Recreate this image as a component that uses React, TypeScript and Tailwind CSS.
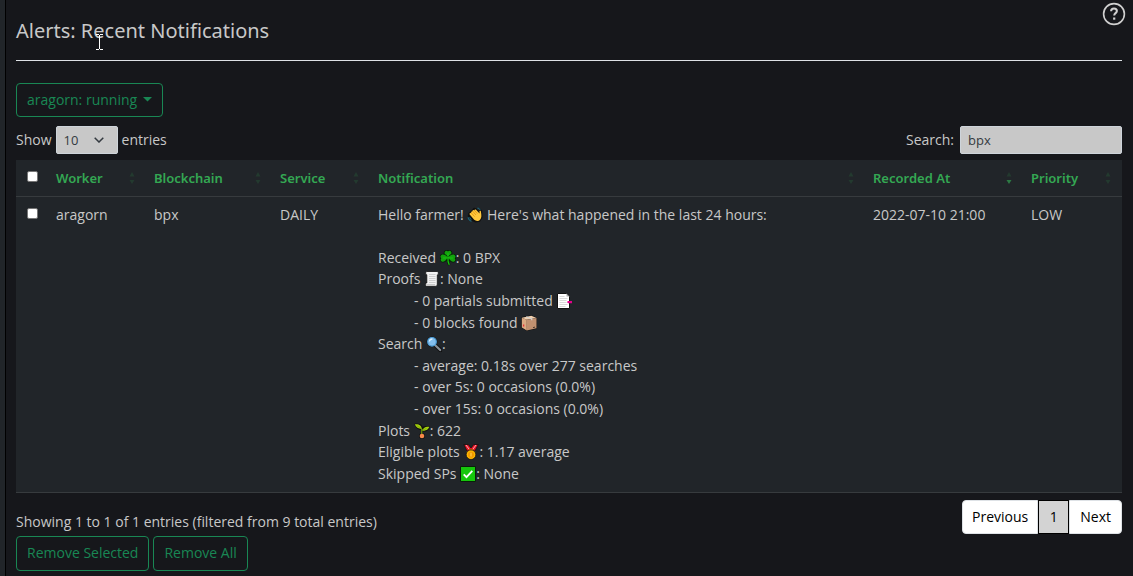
import type { ReactNode } from "react";

function Glyph({ children }: { children: ReactNode }) {
  return (
    <svg viewBox="0 0 16 16" className="inline-block h-4 w-4 align-[-3px]" aria-hidden="true">
      {children}
    </svg>
  );
}

const Wave = () => (
  <Glyph>
    <path d="M2 6.5 5 4l2-2.5L9 2l3 3.5 1-2.5 1.5.7.3 6.8-2.3 3.500-4 .8-3-1.500L1.500 9z" fill="#111" stroke="#111" strokeWidth="1.4" strokeLinejoin="round" />
    <path d="M2.500 7.200 7.200 12.800c1.800 1.700 4.600 1.400 6-.4 1.600-2 1.200-4 1-6L13.800 4c-.8-.7-1.500-.1-1.300.9l.1 1.600L8.800 2.600c-.7-.5-1.500.2-1.100.9L6.400 3c-.7 0-1 .6-.7 1.100L4.800 4.600c-.7.1-.9.7-.5 1.200l-.9.3c-.7.1-1 .6-.9 1.100z" fill="#ffc83d" />
    <path d="m7.700 3.600 2.600 3M5.700 4.200 9 8M4.200 5.800l3.400 3.800" stroke="#d67d00" strokeWidth=".6" fill="none" />
    <path d="M10.500 1.200c1.500 0 2.300.8 2.500 1.900M1.200 10.400c.1 2 1.300 3.300 3.200 3.800M2.700 10.400c.2 1.100.8 1.800 1.700 2.100" stroke="#1689a8" strokeWidth=".8" fill="none" />
  </Glyph>
);

const Shamrock = () => (
  <Glyph>
    <g fill="#13a10e" stroke="#061f06" strokeWidth="1.6" strokeLinejoin="round" style={{ paintOrder: "stroke" }}>
      <path d="M8 8C5.300 6 4 3.600 4.800 1.900 5.600.4 7.200.6 8 1.500c.8-.9 2.400-1.100 3.200.4C12 3.600 10.700 6 8 8z" />
      <path d="M8 7.800C6 10.800 3.400 12.400 1.700 11.400.3 10.500.4 9.100 1.300 8.200.2 7.300.1 5.700 1.500 4.900 3.300 4 6 5.200 8 7.800z" />
      <path d="M8 7.800c2 3 4.600 4.600 6.300 3.600 1.400-.9 1.300-2.300.4-3.200 1.100-.9 1.200-2.500-.2-3.300C12.700 4 10 5.200 8 7.800z" />
    </g>
    <path d="M8 8c-.3 3 0 5 1.300 7" stroke="#061f06" strokeWidth="2.600" fill="none" />
    <path d="M8 7.500c-.3 3 0 5.300 1.300 7.300" stroke="#16c60c" strokeWidth="1.200" fill="none" />
    <path d="M8 8V3M8 8 3 8M8 8h5" stroke="#16c60c" strokeWidth="1" fill="none" />
  </Glyph>
);

const Scroll = () => (
  <Glyph>
    <path d="M2.500 .5H13c1.200 0 1.500 1 1.300 3.200h-1V13c0 1.500-.5 2.300-1.800 2.300H2.500C1.500 15.300 1.300 14 1.500 12h1.300V3.700H1.800C1.600 2 1.800.7 2.500.500z" fill="#f2f2f2" stroke="#111" strokeWidth=".8" />
    <path d="M13 1.200h1v2h-1zM2 13h9v1.800H2.500z" fill="#c8c8c8" />
    <path d="M5 3.500h6.500M5 5.500h6.500M5 7.500h6.500M5 9.500h6.500M5 11.500h6.500" stroke="#c4c4c4" strokeWidth=".8" />
  </Glyph>
);

const BookmarkPage = () => (
  <Glyph>
    <path d="M1.500 .5h9l3 3v12h-12z" fill="#fff" stroke="#111" />
    <path d="M10.500 .5v3h3z" fill="#aaa" />
    <path d="M3.500 3.500h5M3.500 5.500h8M3.500 7.500h7M3.500 9.500h7M3.500 11.500h8M3.500 13.500h6" stroke="#cfcfcf" strokeWidth=".8" />
    <path d="M12 8h4v2.200h-4L11 9.100z" fill="#e3008c" />
  </Glyph>
);

const Package = () => (
  <Glyph>
    <path d="M.8 2.500 10.500.7l5 2.300v10.300l-9.700 2.200L.8 12.500z" fill="#111" stroke="#111" strokeLinejoin="round" />
    <path d="m.8 2.700 9.500-2 5.200 2.200L5.800 4.700z" fill="#f0cfad" />
    <path d="M.8 2.700 5.800 4.700v10.700L.8 12.500z" fill="#dba982" />
    <path d="m5.800 4.700 9.700-1.800v10.300l-9.700 2.200z" fill="#c19170" />
    <path d="m5.200 1.900 5.500 1.900v1.500" stroke="#d4d1cd" strokeWidth="1.200" fill="none" />
    <path d="M2.200 9.500h1v2h-1z" fill="#e81224" />
    <path d="m12 12.600 2-.5" stroke="#4b3a2c" />
  </Glyph>
);

const Magnifier = () => (
  <Glyph>
    <path d="m9 9 5.500 5.300" stroke="#111" strokeWidth="4" strokeLinecap="round" />
    <circle cx="6" cy="5.800" r="5.400" fill="#111" />
    <path d="m9.500 9.500 4.700 4.500" stroke="#888f96" strokeWidth="2.200" strokeLinecap="round" />
    <circle cx="6" cy="5.800" r="4.300" fill="#83beec" stroke="#4d9ed8" strokeWidth="1.200" />
    <path d="M3.300 5.500C3.600 3.900 4.800 3 6.400 3" stroke="#d7efff" strokeWidth="1.300" fill="none" />
  </Glyph>
);

const Seedling = () => (
  <Glyph>
    <path d="M8 13V6.500C5.500 6.300 2.500 5 1.300 1.500 5 .8 8 2.500 8.300 5.500 9.500 3.700 12 3.500 15 4.300 13.800 7 11 8 8.400 7.600" fill="#111" stroke="#111" strokeWidth="1.800" strokeLinejoin="round" />
    <circle cx="8" cy="13" r="2.900" fill="#111" />
    <path d="M7.800 5.800C5 6 1.800 4.500.8 1.300 4.800.5 7.600 2.800 7.800 5.800zM8.600 7.500C9.500 4.600 11.800 3.300 15.400 4.100 14 6.900 11.500 8.200 8.600 7.500z" fill="#a4cf0c" />
    <path d="m3 2.700 4.800 3.200v5.300M8 7.200l4.500-1.700" stroke="#84b50a" strokeWidth="1" fill="none" />
    <circle cx="8" cy="13" r="2.300" fill="#f7894a" />
  </Glyph>
);

const Medal = () => (
  <Glyph>
    <path d="M.8.500h4.500L8 4 10.700.5h4.500L12 7H4z" fill="#e81224" stroke="#111" strokeWidth=".8" />
    <path d="m3 1 3.300 4.500M13 1 9.700 5.500" stroke="#f7b0b4" strokeWidth="1" />
    <path d="M6 5h4v2H6z" fill="#d67d00" />
    <circle cx="8" cy="10.700" r="4.800" fill="#ffb900" stroke="#111" strokeWidth=".7" />
    <circle cx="8" cy="10.700" r="3" fill="#f29a00" />
    <path d="M8 8.800v3.800" stroke="#ffd24a" strokeWidth="1.200" />
  </Glyph>
);

const Check = () => (
  <Glyph>
    <path d="M.5.500h15v15H.5z" fill="#16c60c" stroke="#0a1f0a" />
    <path d="m3.700 8.300 2.800 2.900 5.800-6.300" stroke="#fff" strokeWidth="1.800" fill="none" />
  </Glyph>
);

const message: { indent?: boolean; body: ReactNode }[] = [
  { body: <>Hello farmer! <Wave /> Here's what happened in the last 24 hours:</> },
  { body: null },
  { body: <>Received <Shamrock />: 0 BPX</> },
  { body: <>Proofs <Scroll />: None</> },
  { indent: true, body: <>- 0 partials submitted <BookmarkPage /></> },
  { indent: true, body: <>- 0 blocks found <Package /></> },
  { body: <>Search <Magnifier />:</> },
  { indent: true, body: "- average: 0.18s over 277 searches" },
  { indent: true, body: "- over 5s: 0 occasions (0.0%)" },
  { indent: true, body: "- over 15s: 0 occasions (0.0%)" },
  { body: <>Plots <Seedling />: 622</> },
  { body: <>Eligible plots <Medal />: 1.17 average</> },
  { body: <>Skipped SPs <Check />: None</> },
];

const columns = [
  { name: "Worker", width: "w-[98px]", sorted: false },
  { name: "Blockchain", width: "w-[126px]", sorted: false },
  { name: "Service", width: "w-[98px]", sorted: false },
  { name: "Notification", width: "", sorted: false },
  { name: "Recorded At", width: "w-[158px]", sorted: true },
  { name: "Priority", width: "w-[99px]", sorted: false },
];

function SortMark({ active }: { active: boolean }) {
  return (
    <svg viewBox="0 0 6 12" className="h-3 w-1.5 shrink-0" fill="#34a853" aria-hidden="true">
      <path d="M3 0 5.500 4.500h-5z" opacity=".16" />
      <path d="M3 12 .5 8h5z" opacity={active ? 0.65 : 0.16} />
    </svg>
  );
}

const box = "block h-[11px] w-[11px] appearance-none rounded-xs border border-[#767676] bg-white checked:bg-[#198754]";
const outline = "rounded border border-[#198754] px-2.5 text-[#198754] hover:bg-[#198754] hover:text-white";

export default function App() {
  return (
    <div className="flex min-h-screen bg-[#16171b] font-['Open_Sans','Noto_Sans',sans-serif] text-sm leading-5 text-[#c8c8c8]">
      <div className="w-[6px] shrink-0 border-r border-black bg-[#212529]" />
      <main className="relative min-w-0 flex-1 pr-[11px] pl-2.5">
        <header className="flex h-[61px] items-center justify-between border-b border-[#dee2e6]">
          <h1 className="pt-0.5 font-['Noto_Sans','Open_Sans',sans-serif] text-xl leading-7">Alerts: Recent Notifications</h1>
          <button aria-label="Help" className="-mr-1 mt-1 self-start">
            <svg viewBox="0 0 24 24" className="-mt-0.5 h-6 w-6" fill="none" stroke="#d0d0d0">
              <circle cx="12" cy="12" r="10.400" strokeWidth="1.600" />
              <path d="M9.100 9.200c0-1.700 1.200-2.700 2.900-2.700s2.900 1 2.900 2.500c0 2.100-2.700 2.200-2.700 4.500" strokeWidth="2" />
              <path d="M12.200 15.500v2.200" strokeWidth="2.200" />
            </svg>
          </button>
        </header>
        <svg viewBox="0 0 7 16" className="pointer-events-none absolute top-[34px] left-[90px] h-4 w-[7px]" fill="none" stroke="#fff" aria-hidden="true">
          <path d="M0 .5h3M4 .5h3M3.500 1v14M0 15.500h3M4 15.500h3" />
        </svg>

        <button className={`mt-[22px] flex h-[34px] items-center gap-1.5 ${outline}`}>
          aragorn: running
          <svg viewBox="0 0 9 5" className="mb-0.5 h-[5px] w-[9px]" fill="currentColor" aria-hidden="true"><path d="M0 0h9L4.500 4.500z" /></svg>
        </button>

        <div className="mt-[9px] flex h-7 items-center justify-between">
          <label className="flex items-center gap-1">
            Show
            <span className="relative block">
              <select defaultValue="10" className="h-7 w-[62px] appearance-none rounded-xs border border-[#ced4da] bg-[#c8c8c8] pl-[7px] text-[13px] text-[#343a40]">
                <option>10</option>
                <option>25</option>
                <option>50</option>
                <option>100</option>
              </select>
              <svg viewBox="0 0 10 6" className="pointer-events-none absolute top-[11px] right-[14px] h-1.5 w-2.5" fill="none" stroke="#343a40" strokeWidth="1.500" aria-hidden="true"><path d="m.7.700 4.300 4.300L9.300.700" /></svg>
            </span>
            entries
          </label>
          <label className="flex items-center gap-1.5">
            Search:
            <input type="search" defaultValue="bpx" className="h-7 w-[162px] appearance-none rounded-xs border border-[#ced4da] bg-[#c8c8c8] px-[7px] text-[13px] text-[#343a40]" />
          </label>
        </div>

        <table className="mt-1.5 w-full table-fixed border-collapse bg-[#212529] text-left">
          <thead>
            <tr className="border-b border-[#373b3e]">
              <th className="h-9 w-8 pt-[11px] pl-[11px] align-top"><input type="checkbox" aria-label="Select all" className={box} /></th>
              {columns.map((c) => (
                <th key={c.name} className={`px-2 py-[7px] font-['Noto_Sans','Open_Sans',sans-serif] text-[13px] font-semibold text-[#34a853] ${c.width}`}>
                  <span className="flex items-center justify-between pr-[3px]">
                    {c.name}
                    <SortMark active={c.sorted} />
                  </span>
                </th>
              ))}
            </tr>
          </thead>
          <tbody>
            <tr className="border-b border-[#373b3e] align-top">
              <td className="pt-[11px] pl-[11px]"><input type="checkbox" aria-label="Select row" className={box} /></td>
              <td className="p-2">aragorn</td>
              <td className="p-2">bpx</td>
              <td className="p-2">DAILY</td>
              <td className="px-2 pt-2 pb-1.5">
                <div className="grid h-[281px] auto-rows-fr">
                  {message.map((line, i) => (
                    <div key={i} className={line.indent ? "pl-9" : ""}>{line.body}</div>
                  ))}
                </div>
              </td>
              <td className="p-2">2022-07-10 21:00</td>
              <td className="p-2">LOW</td>
            </tr>
          </tbody>
        </table>

        <div className="mt-[7px] flex items-start justify-between">
          <div>
            <p className="pt-3">Showing 1 to 1 of 1 entries (filtered from 9 total entries)</p>
            <div className="mt-1 flex gap-1">
              <button className={`h-[35px] ${outline}`}>Remove Selected</button>
              <button className={`h-[35px] ${outline}`}>Remove All</button>
            </div>
          </div>
          <nav aria-label="Pages" className="flex h-[34px] text-black">
            <button className="rounded-l border border-[#dee2e6] bg-white px-[9px]">Previous</button>
            <button aria-current="page" className="w-[31px] border border-black bg-[#d3d3d3]">1</button>
            <button className="rounded-r border border-[#dee2e6] bg-white px-2.5">Next</button>
          </nav>
        </div>
      </main>
    </div>
  );
}
